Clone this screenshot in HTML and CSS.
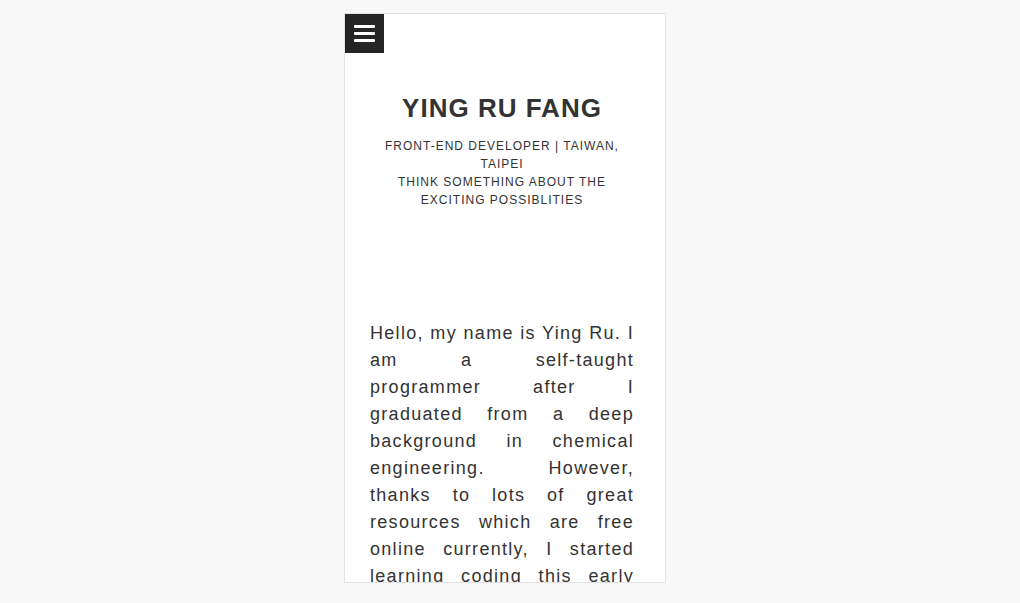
FILE: index.html
```html
<!DOCTYPE html>
<html>
<head>
<meta charset="utf-8">
<link rel="stylesheet" href="styles.css">
</head>
<body>
<div class="card">
  <button class="menu" aria-label="menu">
    <span></span><span></span><span></span>
  </button>
  <header class="hero">
    <h1 class="name">YING RU FANG</h1>
    <p class="tagline">Front-end developer | Taiwan, Taipei<br>Think something about the exciting possiblities</p>
  </header>
  <p class="about">Hello, my name is Ying Ru. I am a self-taught programmer after I graduated from a deep background in chemical engineering. However, thanks to lots of great resources which are free online currently, I started learning coding this early year and fell in love with building things on the web.</p>
</div>
</body>
</html>
```

FILE: styles.css
```css
html, body {
  margin: 0;
  padding: 0;
  background: #f8f8f8;
}
body {
  font-family: "Liberation Sans", Arial, sans-serif;
  color: #333;
  padding-top: 13px;
}
.card {
  margin-left: 344px;
  width: 320px;
  height: 568px;
  background: #fff;
  border: 1px solid #e2e2e2;
  overflow: hidden;
}
.menu {
  display: flex;
  flex-direction: column;
  justify-content: center;
  align-items: center;
  gap: 4px;
  width: 39px;
  height: 39px;
  margin: 0;
  padding: 0;
  border: 0;
  background: #252525;
}
.menu span {
  display: block;
  width: 21px;
  height: 3px;
  border-radius: 1px;
  background: #fff;
}
.hero {
  padding: 0 38px 0 32px;
  text-align: center;
}
.name {
  margin: 39px 0 0;
  font-size: 26px;
  line-height: 32px;
  font-weight: bold;
  letter-spacing: 1px;
}
.tagline {
  margin: 13px 0 0;
  font-size: 12px;
  line-height: 18px;
  text-transform: uppercase;
  letter-spacing: 1px;
}
.about {
  margin: 111px 0 0;
  padding: 0 31px 0 25px;
  font-size: 18px;
  line-height: 27px;
  letter-spacing: 1.3px;
  text-align: justify;
}
```
